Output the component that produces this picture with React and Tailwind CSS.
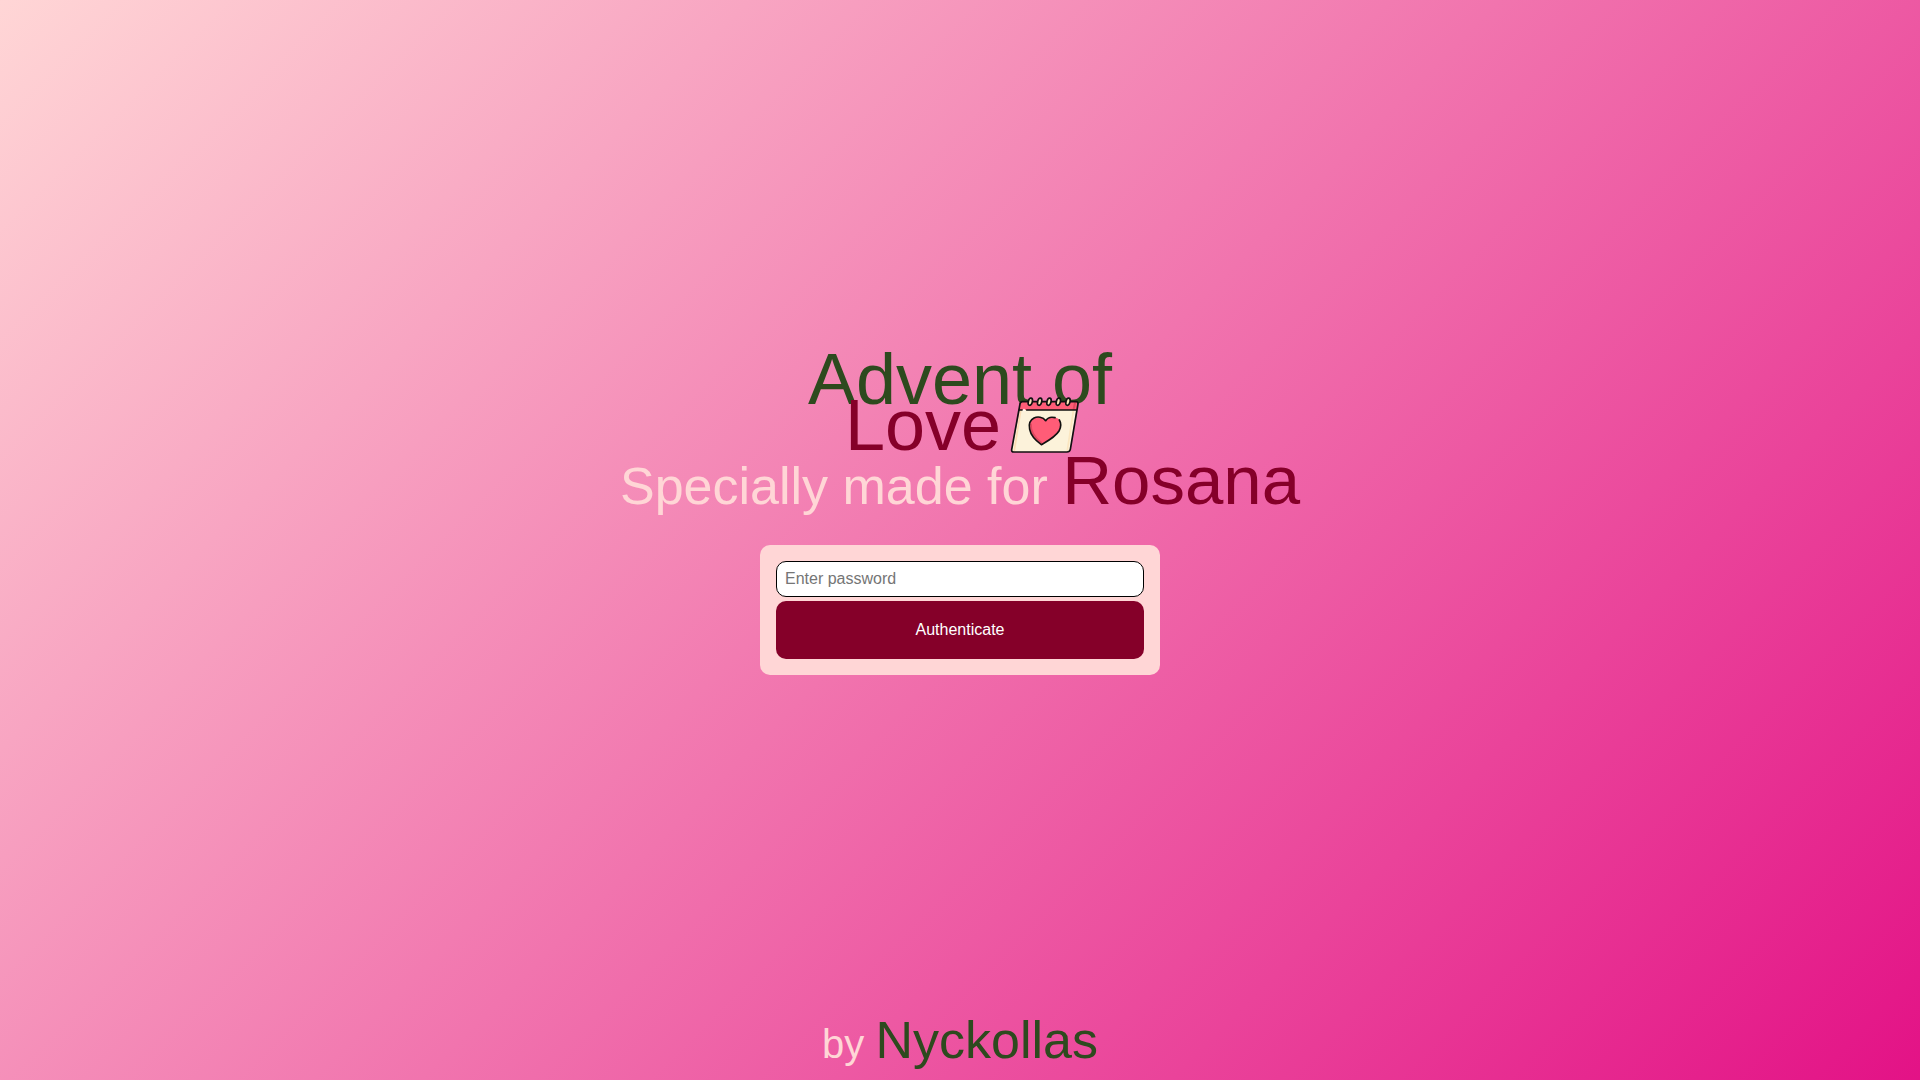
import React, { useState } from 'react';

const CalendarHeart = () => (
    <svg
        viewBox="27 36 198 168"
        className="w-[66px] h-14 shrink-0 overflow-visible"
        fill="none"
        stroke="#111111"
        strokeWidth="5"
        strokeLinecap="round"
        strokeLinejoin="round"
        aria-hidden="true"
    >
        {/* Page */}
        <path d="M60 75H229L210 194Q208 201 201 201H41Q34 201 35 194Z" fill="#fcf2da" stroke="none" />
        <path d="M62 78L43 196" stroke="#fcdcb4" strokeWidth="5" />
        <path d="M220 78L202 196" stroke="#fbe6c0" strokeWidth="5" />
        {/* Header strip */}
        <path d="M66 51H230Q235 51 234 57L230 75H58L61 56Q62 51 66 51Z" fill="#ff5c77" stroke="none" />
        <path d="M225 54L221 72" stroke="#e0485f" strokeWidth="6" />
        <path d="M58 75H66M80 75H229" />
        <path d="M67 50H228Q235 50 234 57L211 193Q209 201 201 201H41Q34 201 35 194L60 57Q61 50 67 50Z" />
        <path d="M72 73V77" stroke="#ffffff" strokeWidth="4" />
        {/* Rings */}
        <g fill="#fbe3b8" strokeWidth="5">
            <ellipse cx="91" cy="50" rx="6" ry="11" transform="rotate(14 91 50)" />
            <ellipse cx="119" cy="50" rx="6" ry="11" transform="rotate(14 119 50)" />
            <ellipse cx="147" cy="50" rx="6" ry="11" transform="rotate(14 147 50)" />
            <ellipse cx="175" cy="50" rx="6" ry="11" transform="rotate(14 175 50)" />
            <ellipse cx="204" cy="50" rx="6" ry="11" transform="rotate(14 204 50)" />
        </g>
        {/* Heart */}
        <path
            d="M137 107C129 95 112 94 102 99C90 105 86 119 89 133C93 154 109 168 124 179C143 168 165 157 177 138C184 126 184 111 176 102C165 94 146 94 137 107Z"
            fill="#ff5c77"
            stroke="none"
        />
        <path d="M93 118C91 144 108 160 124 173" stroke="#e0485f" strokeWidth="5" />
        <path d="M165 98C154 95 143 98 137 107C129 95 112 94 102 99C90 105 86 119 89 133C93 154 109 168 124 179C143 168 165 157 177 138C183 127 183 113 178 105" />
    </svg>
);

const App = () => {
    const [password, setPassword] = useState('');

    const handleSubmit = (e) => {
        e.preventDefault();
        setPassword('');
    };

    return (
        <div className="min-h-screen flex flex-col bg-linear-[135deg,#ffd6d6,#e31286] font-['Liberation_Sans',Arial,sans-serif]">
            <main className="grow flex flex-col items-center justify-center gap-[26px] pt-5">
                <header className="flex flex-col items-center text-center">
                    <h1 className="flex flex-col items-center text-7xl leading-[46px] text-[#2d4a1e]">
                        Advent of
                        <span className="h-[46px] flex items-center gap-2 text-[#850029]">
                            Love
                            <CalendarHeart />
                        </span>
                    </h1>
                    <h2 className="text-[52px] leading-[66px] text-[#ffd6d6]">
                        Specially made for <span className="text-[69px] text-[#850029]">Rosana</span>
                    </h2>
                </header>

                <form
                    onSubmit={handleSubmit}
                    className="w-full max-w-[400px] flex flex-col gap-1 p-4 rounded-[10px] bg-[#ffd6d6]"
                >
                    <input
                        type="password"
                        aria-label="Password"
                        placeholder="Enter password"
                        value={password}
                        onChange={(e) => setPassword(e.target.value)}
                        className="h-9 px-2 rounded-[10px] border border-black bg-white text-base text-black placeholder:text-[#757575]"
                    />
                    <button
                        type="submit"
                        className="h-[58px] rounded-[10px] bg-[#850029] text-base text-white cursor-pointer"
                    >
                        Authenticate
                    </button>
                </form>
            </main>

            <footer className="pb-1.5 text-center text-[40px] leading-[60px] text-[#ffd6d6]">
                by <span className="text-[52px] text-[#2d4a1e]">Nyckollas</span>
            </footer>
        </div>
    );
};

export default App;
